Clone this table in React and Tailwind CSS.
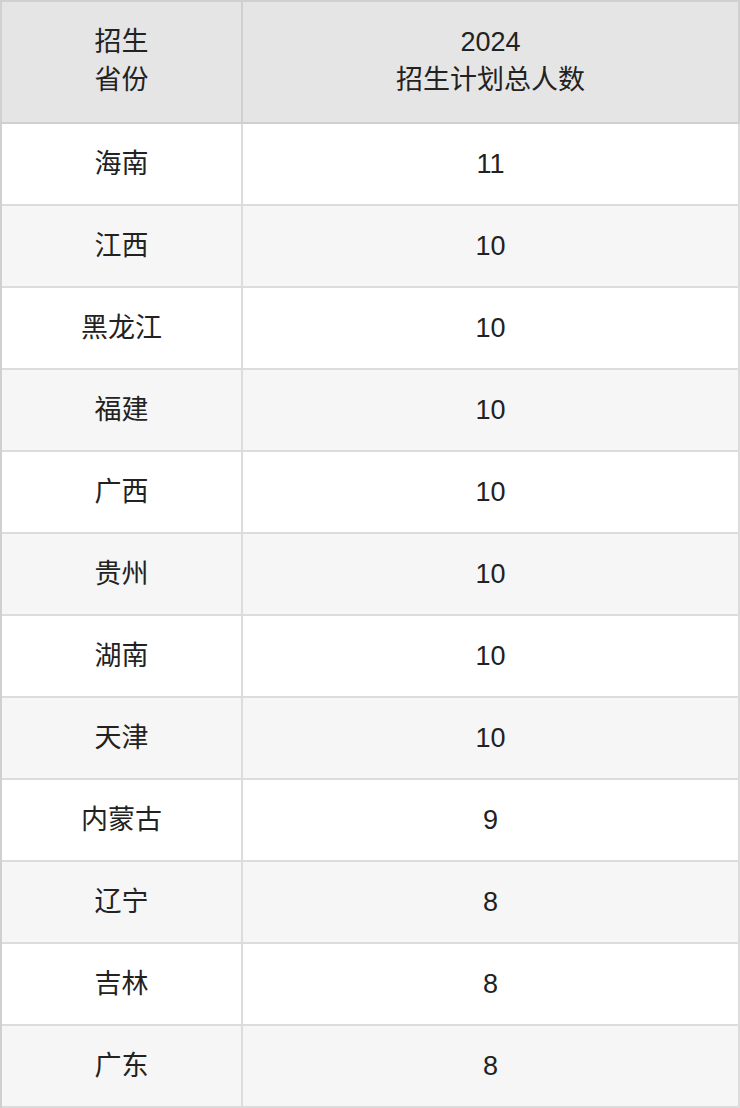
const rows = [
  ['海南', '11'],
  ['江西', '10'],
  ['黑龙江', '10'],
  ['福建', '10'],
  ['广西', '10'],
  ['贵州', '10'],
  ['湖南', '10'],
  ['天津', '10'],
  ['内蒙古', '9'],
  ['辽宁', '8'],
  ['吉林', '8'],
  ['广东', '8'],
];

export default function App() {
  return (
    <div
      className="w-[740px] bg-white text-[#222] text-[27px] leading-[38px]"
      style={{ fontFamily: '"Liberation Sans", Arial, "Noto Sans CJK SC", sans-serif' }}
    >
      <div className="border-l-2 border-t-2 border-[#d0d0d0]">
        <div className="grid grid-cols-[241px_497px] bg-[#e5e5e5]">
          <div className="h-[122px] flex items-center justify-center text-center border-r-2 border-b-2 border-[#d0d0d0]">
            <div className="-mt-[2px]">
              招生
              <br />
              省份
            </div>
          </div>
          <div className="h-[122px] flex items-center justify-center text-center border-r-2 border-b-2 border-[#d0d0d0]">
            <div className="-mt-[2px]">
              2024
              <br />
              招生计划总人数
            </div>
          </div>
        </div>
        {rows.map(([prov, num], i) => (
          <div
            key={prov}
            className={`grid grid-cols-[241px_497px] ${i % 2 === 0 ? 'bg-white' : 'bg-[#f6f6f6]'}`}
          >
            <div className="h-[82px] flex items-center justify-center border-r-2 border-b-2 border-[#dcdcdc]">
              {prov}
            </div>
            <div className="h-[82px] flex items-center justify-center border-r-2 border-b-2 border-[#dcdcdc]">
              {num}
            </div>
          </div>
        ))}
      </div>
    </div>
  );
}
